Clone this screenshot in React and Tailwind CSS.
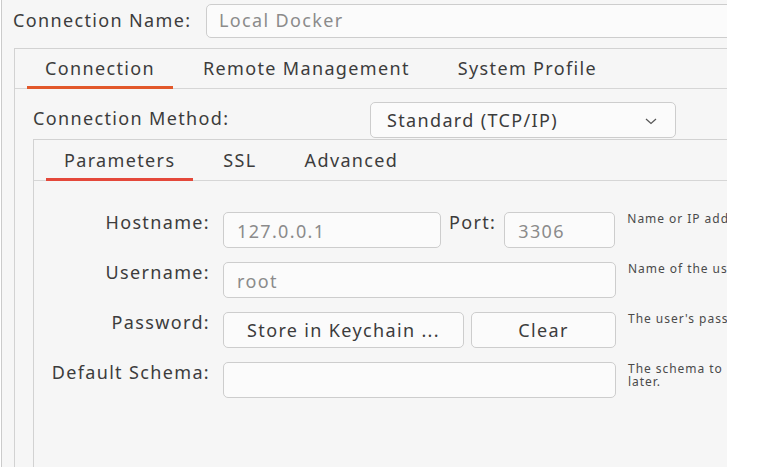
import { useState } from "react";

function Field({ value, placeholder, className = "" }) {
  return (
    <div
      className={`shrink-0 h-[36px] rounded-[5px] border border-[#cdcdcd] bg-[#fbfbfb] flex items-center pt-[3px] pl-[13px] text-[#8b8b8b] ${className}`}
    >
      {value || placeholder}
    </div>
  );
}

function Button({ children, className = "" }) {
  return (
    <div
      className={`shrink-0 h-[36px] rounded-[5px] border border-[#cdcdcd] bg-[#fbfbfb] flex items-center justify-center whitespace-nowrap text-[#3c3c3c] ${className}`}
    >
      {children}
    </div>
  );
}

function Help({ children }) {
  return (
    <div className="shrink-0 ml-[12px] text-[12px] leading-[13px] tracking-[0.08em] text-[#4a4a4a] whitespace-nowrap">
      {children}
    </div>
  );
}

function Label({ children }) {
  return (
    <span className="shrink-0 w-[176px] text-right leading-[20px] whitespace-nowrap">
      {children}
    </span>
  );
}

function Tabs({ tabs, active, onPick, height, barColor, barHeight }) {
  return (
    <div className={`shrink-0 flex gap-[12px] pl-[12px] border-b border-[#d6d6d6] ${height}`}>
      {tabs.map((t, i) => (
        <button
          key={t}
          onClick={() => onPick(i)}
          className="relative shrink-0 px-[18px] flex items-center whitespace-nowrap text-[#3c3c3c]"
        >
          {t}
          {i === active && (
            <span
              className={`absolute left-0 right-0 bottom-[-1px] ${barHeight} ${barColor}`}
            />
          )}
        </button>
      ))}
    </div>
  );
}

export default function App() {
  const [outerTab, setOuterTab] = useState(0);
  const [innerTab, setInnerTab] = useState(0);

  return (
    <div className="w-[762px] h-[467px] bg-white flex font-['Noto_Sans',sans-serif] text-[18px] tracking-[0.075em] text-[#3c3c3c]">
      <div className="shrink-0 w-[726px] h-full ml-px border-l border-[#cbcbcb] bg-[#f6f6f6] overflow-hidden flex flex-col">
        {/* connection name */}
        <div className="h-[48px] flex items-center pl-[11px] pb-[7px] shrink-0">
          <span className="shrink-0 w-[193px] whitespace-nowrap">Connection Name:</span>
          <div className="w-[600px] shrink-0 h-[34px] rounded-[5px] border border-[#cdcdcd] bg-[#fbfbfb] flex items-center pl-[12px] text-[#8b8b8b]">
            Local Docker
          </div>
        </div>

        {/* outer panel */}
        <div className="shrink-0 ml-[12px] flex-1 flex flex-col border-t border-l border-[#d2d2d2] w-[760px]">
          <Tabs
            tabs={["Connection", "Remote Management", "System Profile"]}
            active={outerTab}
            onPick={setOuterTab}
            height="h-[40px]"
            barHeight="h-[3px]"
            barColor="bg-[#e2582a]"
          />

          <div className="h-[50px] flex pl-[18px] shrink-0">
            <span className="shrink-0 w-[337px] pt-[17px] leading-[24px] whitespace-nowrap">
              Connection Method:
            </span>
            <div className="shrink-0 mt-[13px] w-[306px] h-[36px] rounded-[5px] border border-[#cdcdcd] bg-[#fbfbfb] flex items-center pl-[16px] pr-[18px]">
              <span className="flex-1 whitespace-nowrap">Standard (TCP/IP)</span>
              <svg width="12" height="7" viewBox="0 0 12 7" className="mt-[3px]">
                <polyline
                  points="1,1 6,5.5 11,1"
                  fill="none"
                  stroke="#555"
                  strokeWidth="1.2"
                />
              </svg>
            </div>
          </div>

          {/* inner panel */}
          <div className="ml-[18px] flex-1 flex flex-col border-t border-l border-[#d2d2d2]">
            <Tabs
              tabs={["Parameters", "SSL", "Advanced"]}
              active={innerTab}
              onPick={setInnerTab}
              height="h-[41px]"
              barHeight="h-[3px]"
              barColor="bg-[#e4483a]"
            />

            <div className="pt-[31px] flex flex-col gap-[14px]">
              <div className="flex items-start h-[36px]">
                <Label>Hostname:</Label>
                <Field placeholder="127.0.0.1" className="ml-[13px] w-[218px]" />
                <span className="shrink-0 ml-[8px] leading-[20px]">Port:</span>
                <Field placeholder="3306" className="ml-[8px] w-[111px]" />
                <Help>Name or IP address of the server host - and TCP/IP port.</Help>
              </div>

              <div className="flex items-start h-[36px]">
                <Label>Username:</Label>
                <Field placeholder="root" className="ml-[13px] w-[393px]" />
                <Help>Name of the user to connect with.</Help>
              </div>

              <div className="flex items-start h-[36px]">
                <Label>Password:</Label>
                <Button className="ml-[13px] w-[241px]">Store in Keychain ...</Button>
                <Button className="ml-[7px] w-[145px]">Clear</Button>
                <Help>The user's password. Will be requested later if it's not set.</Help>
              </div>

              <div className="flex items-start h-[36px]">
                <Label>Default Schema:</Label>
                <Field placeholder="" className="ml-[13px] w-[393px]" />
                <Help>
                  <div>The schema to use as default schema. Leave blank to select it</div>
                  <div>later.</div>
                </Help>
              </div>
            </div>
          </div>
        </div>
      </div>
    </div>
  );
}
